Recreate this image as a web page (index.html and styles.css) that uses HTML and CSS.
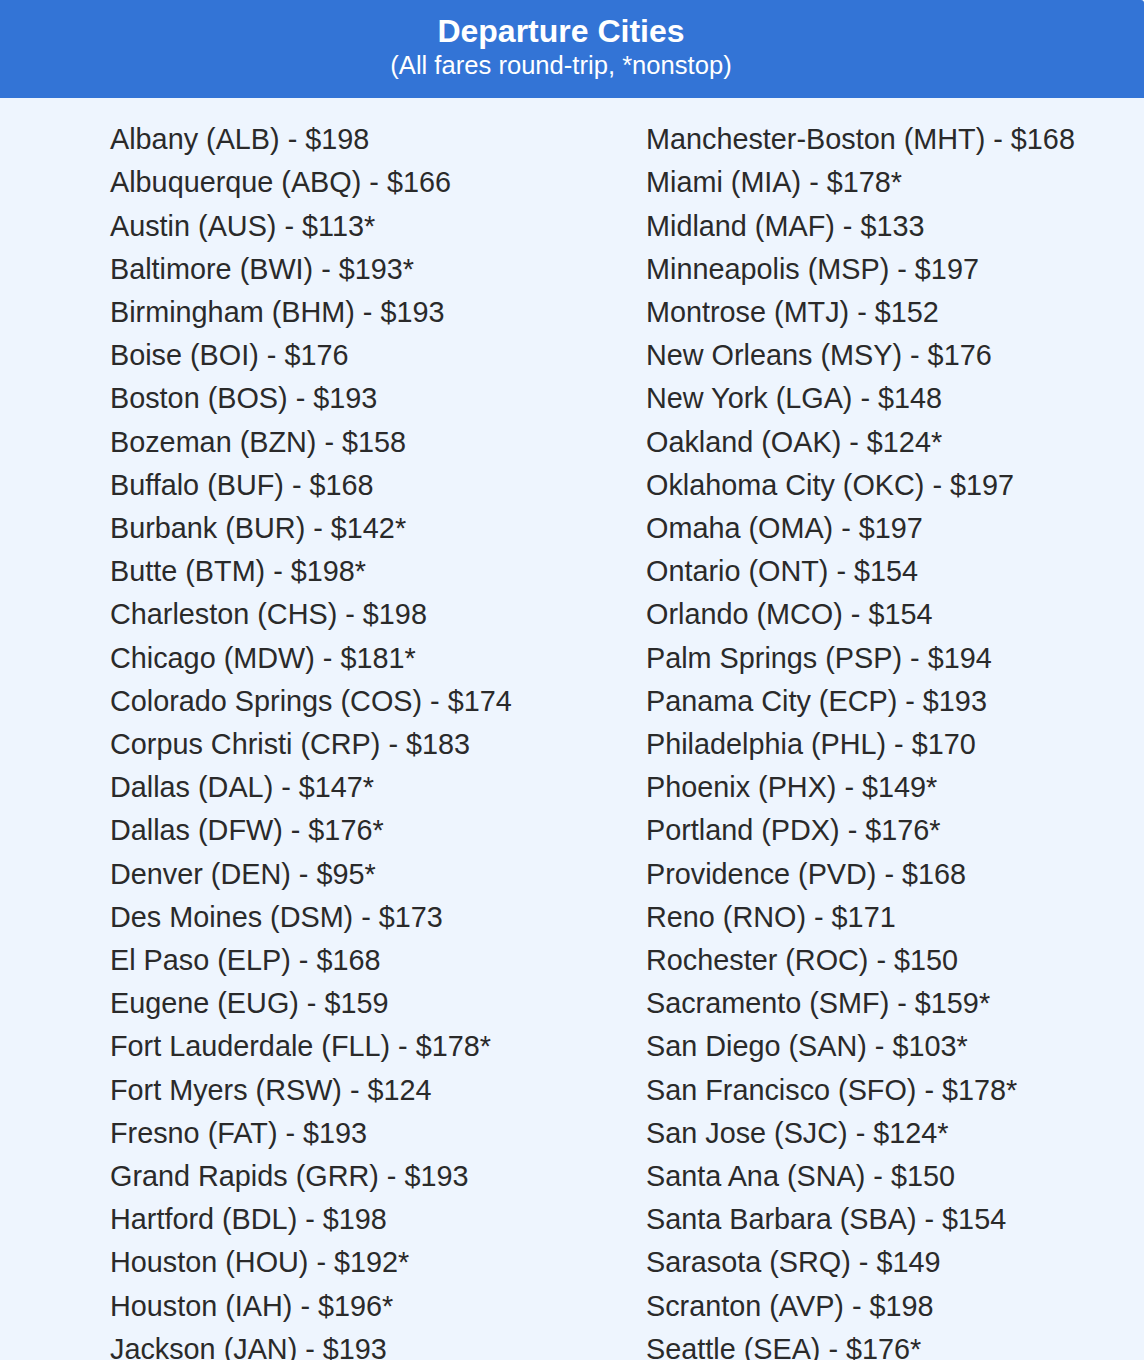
FILE: index.html
```html
<!DOCTYPE html>
<html lang="en">
<head>
<meta charset="utf-8">
<title>Departure Cities</title>
<link rel="stylesheet" href="styles.css">
</head>
<body>
<div class="card">
  <header class="card-header">
    <h1 class="title">Departure Cities</h1>
    <p class="subtitle">(All fares round-trip, *nonstop)</p>
  </header>
  <div class="cities">
    <ul class="col">
      <li>Albany (ALB) - $198</li>
      <li>Albuquerque (ABQ) - $166</li>
      <li>Austin (AUS) - $113*</li>
      <li>Baltimore (BWI) - $193*</li>
      <li>Birmingham (BHM) - $193</li>
      <li>Boise (BOI) - $176</li>
      <li>Boston (BOS) - $193</li>
      <li>Bozeman (BZN) - $158</li>
      <li>Buffalo (BUF) - $168</li>
      <li>Burbank (BUR) - $142*</li>
      <li>Butte (BTM) - $198*</li>
      <li>Charleston (CHS) - $198</li>
      <li>Chicago (MDW) - $181*</li>
      <li>Colorado Springs (COS) - $174</li>
      <li>Corpus Christi (CRP) - $183</li>
      <li>Dallas (DAL) - $147*</li>
      <li>Dallas (DFW) - $176*</li>
      <li>Denver (DEN) - $95*</li>
      <li>Des Moines (DSM) - $173</li>
      <li>El Paso (ELP) - $168</li>
      <li>Eugene (EUG) - $159</li>
      <li>Fort Lauderdale (FLL) - $178*</li>
      <li>Fort Myers (RSW) - $124</li>
      <li>Fresno (FAT) - $193</li>
      <li>Grand Rapids (GRR) - $193</li>
      <li>Hartford (BDL) - $198</li>
      <li>Houston (HOU) - $192*</li>
      <li>Houston (IAH) - $196*</li>
      <li>Jackson (JAN) - $193</li>
    </ul>
    <ul class="col">
      <li>Manchester-Boston (MHT) - $168</li>
      <li>Miami (MIA) - $178*</li>
      <li>Midland (MAF) - $133</li>
      <li>Minneapolis (MSP) - $197</li>
      <li>Montrose (MTJ) - $152</li>
      <li>New Orleans (MSY) - $176</li>
      <li>New York (LGA) - $148</li>
      <li>Oakland (OAK) - $124*</li>
      <li>Oklahoma City (OKC) - $197</li>
      <li>Omaha (OMA) - $197</li>
      <li>Ontario (ONT) - $154</li>
      <li>Orlando (MCO) - $154</li>
      <li>Palm Springs (PSP) - $194</li>
      <li>Panama City (ECP) - $193</li>
      <li>Philadelphia (PHL) - $170</li>
      <li>Phoenix (PHX) - $149*</li>
      <li>Portland (PDX) - $176*</li>
      <li>Providence (PVD) - $168</li>
      <li>Reno (RNO) - $171</li>
      <li>Rochester (ROC) - $150</li>
      <li>Sacramento (SMF) - $159*</li>
      <li>San Diego (SAN) - $103*</li>
      <li>San Francisco (SFO) - $178*</li>
      <li>San Jose (SJC) - $124*</li>
      <li>Santa Ana (SNA) - $150</li>
      <li>Santa Barbara (SBA) - $154</li>
      <li>Sarasota (SRQ) - $149</li>
      <li>Scranton (AVP) - $198</li>
      <li>Seattle (SEA) - $176*</li>
    </ul>
  </div>
</div>
</body>
</html>
```
FILE: styles.css
```css
html, body {
  margin: 0;
  padding: 0;
  background: #ffffff;
}

body {
  font-family: "Liberation Sans", Arial, Helvetica, sans-serif;
}

.card {
  background: #eef5fe;
  border-top-right-radius: 3px;
  overflow: hidden;
  min-height: 1360px;
}

.card-header {
  background: #3374d6;
  color: #ffffff;
  text-align: center;
  padding: 12px 22px 17px 0;
}

.title {
  margin: 0;
  font-size: 32px;
  font-weight: 700;
  line-height: 1.2;
}

.subtitle {
  margin: 0;
  font-size: 25.6px;
  line-height: 1.2;
}

.cities {
  display: grid;
  grid-template-columns: 536px 1fr;
  padding: 20px 0 0 110px;
  color: #2a2a2a;
}

.col {
  list-style: none;
  margin: 0;
  padding: 0;
}

.col li {
  font-size: 28.8px;
  line-height: 43.2px;
  white-space: nowrap;
}
```
